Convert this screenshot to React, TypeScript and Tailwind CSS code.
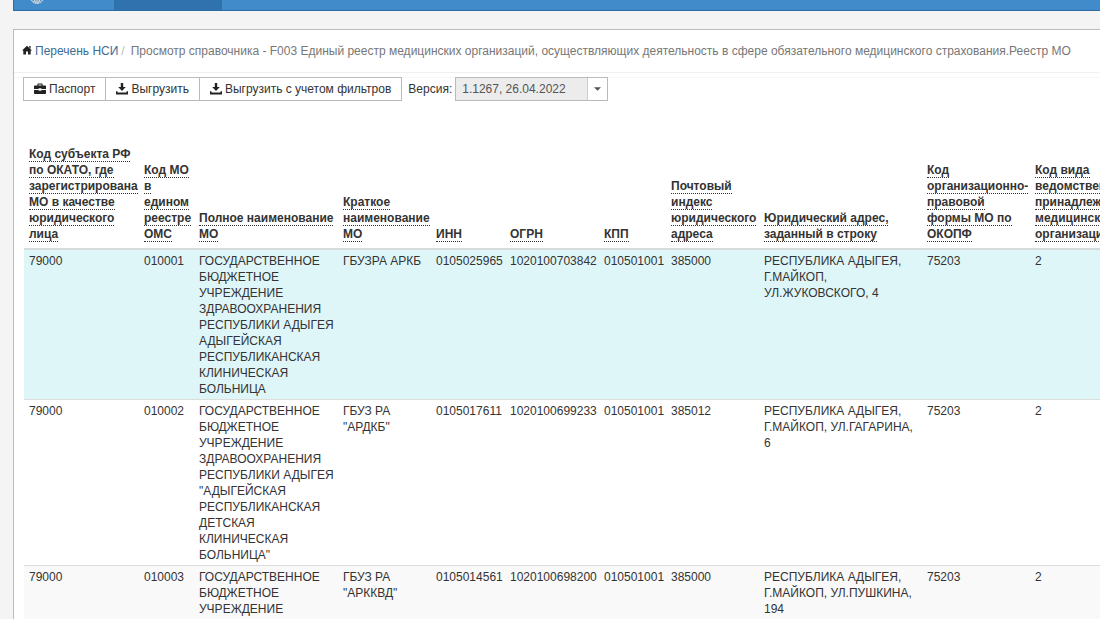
import { useState } from 'react';

const columns = [
    { title: 'Код субъекта РФ по ОКАТО, где зарегистрирована МО в качестве юридического лица', width: 'w-[115px]' },
    { title: 'Код МО в едином реестре ОМС', width: 'w-[55px]' },
    { title: 'Полное наименование МО', width: 'w-[144px]' },
    { title: 'Краткое наименование МО', width: 'w-[93px]' },
    { title: 'ИНН', width: 'w-[74px]' },
    { title: 'ОГРН', width: 'w-[94px]' },
    { title: 'КПП', width: 'w-[67px]' },
    { title: 'Почтовый индекс юридического адреса', width: 'w-[93px]' },
    { title: 'Юридический адрес, заданный в строку', width: 'w-[163px]' },
    { title: 'Код организационно-правовой формы МО по ОКОПФ', width: 'w-[108px]' },
    { title: 'Код вида ведомственной принадлежности медицинской организации', width: 'w-[115px]' },
];

const rows = [
    [
        '79000',
        '010001',
        'ГОСУДАРСТВЕННОЕ БЮДЖЕТНОЕ УЧРЕЖДЕНИЕ ЗДРАВООХРАНЕНИЯ РЕСПУБЛИКИ АДЫГЕЯ АДЫГЕЙСКАЯ РЕСПУБЛИКАНСКАЯ КЛИНИЧЕСКАЯ БОЛЬНИЦА',
        'ГБУЗРА АРКБ',
        '0105025965',
        '1020100703842',
        '010501001',
        '385000',
        'РЕСПУБЛИКА АДЫГЕЯ, Г.МАЙКОП, УЛ.ЖУКОВСКОГО, 4',
        '75203',
        '2',
    ],
    [
        '79000',
        '010002',
        'ГОСУДАРСТВЕННОЕ БЮДЖЕТНОЕ УЧРЕЖДЕНИЕ ЗДРАВООХРАНЕНИЯ РЕСПУБЛИКИ АДЫГЕЯ "АДЫГЕЙСКАЯ РЕСПУБЛИКАНСКАЯ ДЕТСКАЯ КЛИНИЧЕСКАЯ БОЛЬНИЦА"',
        'ГБУЗ РА "АРДКБ"',
        '0105017611',
        '1020100699233',
        '010501001',
        '385012',
        'РЕСПУБЛИКА АДЫГЕЯ, Г.МАЙКОП, УЛ.ГАГАРИНА, 6',
        '75203',
        '2',
    ],
    [
        '79000',
        '010003',
        'ГОСУДАРСТВЕННОЕ БЮДЖЕТНОЕ УЧРЕЖДЕНИЕ',
        'ГБУЗ РА "АРККВД"',
        '0105014561',
        '1020100698200',
        '010501001',
        '385000',
        'РЕСПУБЛИКА АДЫГЕЯ, Г.МАЙКОП, УЛ.ПУШКИНА, 194',
        '75203',
        '2',
    ],
];

const HomeIcon = () => (
    <svg viewBox="0 0 10 12" className="w-2.5 h-3 fill-[#222]" aria-hidden="true">
        <path d="M5 .8 10 5.6H8.7V9.6H6V6.6H4V9.6H1.3V5.6H0L5 .8ZM7.2 1H8.6V3.8L7.2 2.6Z" />
    </svg>
);

const BriefcaseIcon = () => (
    <svg viewBox="0 0 12 12" className="w-3 h-3 fill-[#222]" aria-hidden="true">
        <path d="M3.4 2.4V1.2Q3.4 .4 4.2 .4H7.8Q8.6 .4 8.6 1.2V2.4H11.3Q12 2.4 12 3.1V6.1H7.4V5.3H4.6V6.1H0V3.1Q0 2.4 .7 2.4ZM4.6 2.4H7.4V1.5H4.6Z" />
        <path d="M0 7H4.6V7.8H7.4V7H12V10.3Q12 11 11.3 11H.7Q0 11 0 10.3Z" />
    </svg>
);

const SaveIcon = () => (
    <svg viewBox="0 0 12 12" className="w-3 h-3 fill-[#222]" aria-hidden="true">
        <path d="M4.8 0H7.2V4H9.8L6 8 2.2 4H4.8Z" />
        <path d="M0 8.2H1.5V9.5H10.5V8.2H12V11.4H0Z" />
    </svg>
);

const EmblemIcon = () => (
    <svg viewBox="0 0 14 14" className="w-3.5 h-3.5" aria-hidden="true">
        <path d="M1 9Q3 13 7 13.3 11 13 13 9" fill="none" stroke="#c3d0d8" strokeWidth="1.6" strokeDasharray="2 .6" />
        <path d="M4 9 5.4 12.4M7 8V13.4M10 9 8.6 12.4" stroke="#e2ded0" strokeWidth="1.2" />
    </svg>
);

const actionClass = 'flex items-center gap-[3px] h-6 border border-[#bbb] bg-white px-2.5 whitespace-nowrap hover:bg-gray-100';

export default function App() {
    const [version, setVersion] = useState('1.1267, 26.04.2022');

    return (
        <div className="h-screen overflow-hidden flex flex-col bg-[#f4f4f4] pl-[13px] font-['Liberation_Sans',Arial,sans-serif] text-xs leading-4 text-[#333]">
            {/* Navigation */}
            <nav className="flex items-end h-[11px] shrink-0 overflow-hidden bg-[#428bca] border-l border-b border-[#2d6ca2]">
                <div className="w-[100px] pl-4 pb-1.5">
                    <EmblemIcon />
                </div>
                <div className="w-[108px] h-full bg-[#2f72ae]" />
            </nav>

            <main className="mt-[18px] flex-1 min-h-0 overflow-hidden bg-white border-t border-l border-[#bbb]">
                {/* Breadcrumbs */}
                <div className="flex items-center h-[43px] pl-2 border-b border-[#f0f0f0] whitespace-nowrap">
                    <HomeIcon />
                    <a href="#" className="ml-[3px] text-[#3a6d96] hover:underline">Перечень НСИ</a>
                    <span className="px-[3px] text-[#bbb]">/</span>
                    <span className="ml-[3px] text-[#777]">
                        Просмотр справочника - F003 Единый реестр медицинских организаций, осуществляющих деятельность в сфере обязательного медицинского страхования.Реестр МО
                    </span>
                </div>

                {/* Toolbar */}
                <div className="mt-1 border-t border-[#f6f6f6]">
                    <div className="flex items-center ml-[9px] -mt-px">
                        <button type="button" className={actionClass}>
                            <BriefcaseIcon />
                            Паспорт
                        </button>
                        <button type="button" className={`${actionClass} -ml-px`}>
                            <SaveIcon />
                            Выгрузить
                        </button>
                        <button type="button" className={`${actionClass} -ml-px`}>
                            <SaveIcon />
                            Выгрузить с учетом фильтров
                        </button>
                        <label htmlFor="version" className="ml-1.5">Версия:</label>
                        <div className="relative ml-[3px] w-[153px]">
                            <select
                                id="version"
                                value={version}
                                onChange={(e) => setVersion(e.target.value)}
                                className="block w-full h-6 appearance-none border border-[#bbb] bg-[#ececec] pl-1.5 pr-6 text-[#555]"
                            >
                                <option>1.1267, 26.04.2022</option>
                            </select>
                            <span className="pointer-events-none absolute inset-y-px right-px w-5 flex items-center justify-center bg-white border-l border-[#ccc]">
                                <svg viewBox="0 0 8 4" className="w-[7px] h-1 fill-[#555]" aria-hidden="true">
                                    <path d="M0 0H8L4 4Z" />
                                </svg>
                            </span>
                        </div>
                    </div>
                </div>

                {/* Registry */}
                <table className="table-fixed w-[1121px] mt-[45px] ml-2.5 border-collapse text-left">
                    <thead>
                        <tr className="align-bottom border-b-2 border-[#d5dadb]">
                            {columns.map((col) => (
                                <th key={col.title} scope="col" className={`${col.width} pl-[5px] pr-1 pb-1.5 font-bold`}>
                                    <span className="border-b border-dotted border-[#333]">{col.title}</span>
                                </th>
                            ))}
                        </tr>
                    </thead>
                    <tbody>
                        {rows.map((row, index) => (
                            <tr
                                key={row[1]}
                                className={`align-top border-b border-[#ddd] ${index === 0 ? 'bg-[#dff6f9]' : 'odd:bg-[#f9f9f9]'}`}
                            >
                                {row.map((cell, i) => (
                                    <td key={i} className="pl-[5px] pr-1 pt-[3px] pb-0.5">{cell}</td>
                                ))}
                            </tr>
                        ))}
                    </tbody>
                </table>
            </main>
        </div>
    );
}
